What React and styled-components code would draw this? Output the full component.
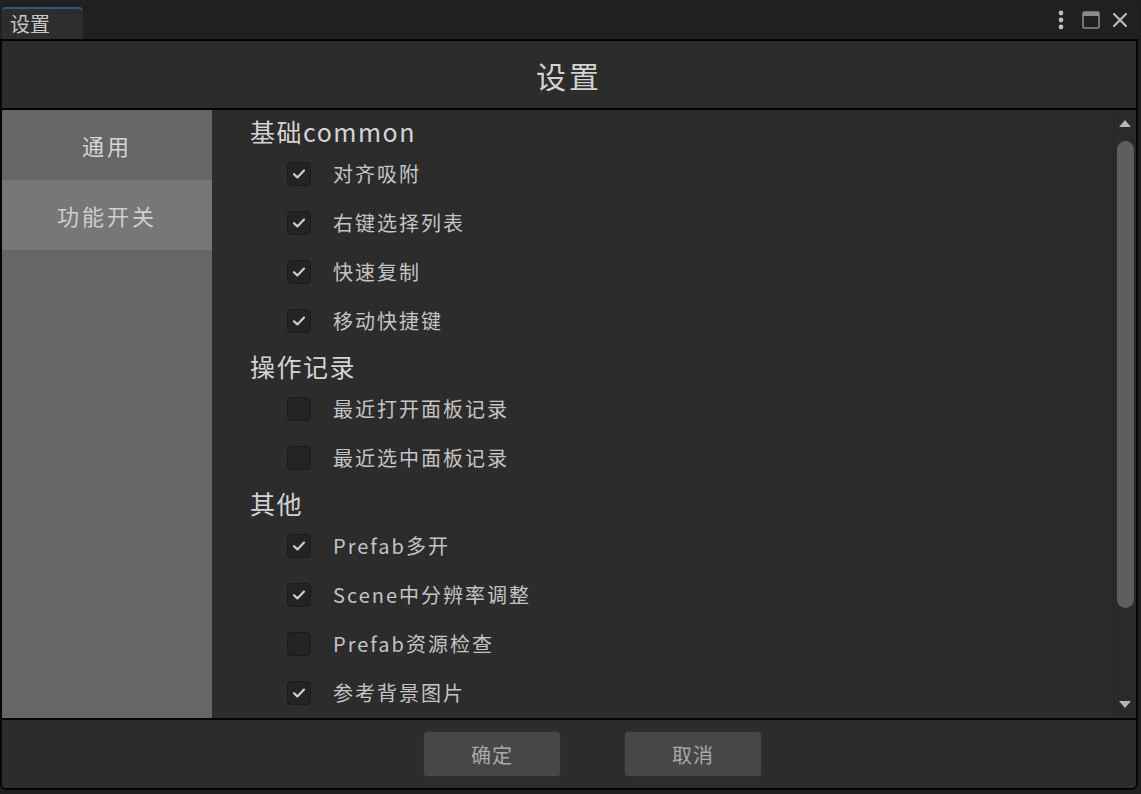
import React, { useState } from "react";
import styled, { createGlobalStyle } from "styled-components";

const GlobalStyle = createGlobalStyle`
  html, body {
    margin: 0;
    padding: 0;
    background: #1e1e1e;
    font-family: "Noto Sans CJK SC", "Noto Sans", sans-serif;
  }
`;

const Window = styled.div`
  width: 1138px;
  height: 790px;
  display: flex;
  flex-direction: column;
  background: #202020;
  border-radius: 0 8px 6px 6px;
  overflow: hidden;
`;

const TabBar = styled.div`
  height: 39px;
  display: flex;
  align-items: flex-end;
  padding-left: 2px;
  background: #202020;
`;

const Tab = styled.div`
  width: 81px;
  height: 32px;
  box-sizing: border-box;
  border-top: 2px solid #2b5a86;
  border-radius: 4px 4px 0 0;
  background: #2d2d2d;
  color: #c8c8c8;
  font-size: 20px;
  line-height: 30px;
  padding-left: 8px;
`;

const WindowTools = styled.div`
  margin-left: auto;
  height: 39px;
  display: flex;
  align-items: center;
  gap: 12px;
  padding-right: 10px;
`;

const ToolIcon = styled.svg`
  display: block;
  fill: none;
  stroke: #bdbdbd;
  margin-right: ${(p) => p.$space || 0}px;
`;

const Panel = styled.div`
  flex: 1;
  display: flex;
  flex-direction: column;
  border: 2px solid #050505;
  border-radius: 0 0 6px 6px;
  background: #2c2c2c;
  min-height: 0;
`;

const Header = styled.div`
  height: 67px;
  flex-shrink: 0;
  display: flex;
  align-items: center;
  justify-content: center;
  border-bottom: 2px solid #050505;
  color: #d2d2d2;
  font-size: 30px;
  letter-spacing: 3px;
`;

const Body = styled.div`
  flex: 1;
  display: flex;
  min-height: 0;
`;

const Sidebar = styled.div`
  width: 210px;
  flex-shrink: 0;
  background: #666666;
`;

const SideItem = styled.div`
  height: 70px;
  display: flex;
  align-items: center;
  justify-content: center;
  font-size: 22px;
  letter-spacing: 3px;
  color: ${(p) => (p.$active ? "#cfcfcf" : "#d6d6d6")};
  background: ${(p) => (p.$active ? "#777777" : "transparent")};
  cursor: pointer;
`;

const Content = styled.div`
  flex: 1;
  padding: 3px 0 0 38px;
  background: #2c2c2c;
  overflow: hidden;
`;

const GroupTitle = styled.div`
  height: 36px;
  line-height: 36px;
  margin-top: ${(p) => (p.$first ? "0" : "3px")};
  color: #d4d4d4;
  font-size: 25px;
  letter-spacing: 1.5px;
`;

const Row = styled.label`
  height: 49px;
  display: flex;
  align-items: center;
  padding-left: 37px;
  gap: 22px;
  color: #c4c4c4;
  font-size: 20px;
  letter-spacing: 2px;
  cursor: pointer;
`;

const Box = styled.span`
  width: 24px;
  height: 24px;
  box-sizing: border-box;
  flex-shrink: 0;
  display: flex;
  align-items: center;
  justify-content: center;
  background: #232323;
  border: 1px solid #1b1b1b;
  border-radius: 4px;
`;

const ScrollBar = styled.div`
  width: 23px;
  flex-shrink: 0;
  display: flex;
  flex-direction: column;
  align-items: center;
  box-sizing: border-box;
  border-left: 1px solid #252525;
  background: #2a2a2a;
  padding: 10px 0 10px;
`;

const Arrow = styled.div`
  width: 0;
  height: 0;
  border-left: 6px solid transparent;
  border-right: 6px solid transparent;
  ${(p) =>
    p.$down
      ? "border-top: 7px solid #b4b4b4;"
      : "border-bottom: 7px solid #b4b4b4;"}
`;

const Track = styled.div`
  flex: 1;
  width: 100%;
  padding: 14px 0;
  box-sizing: border-box;
  display: flex;
  justify-content: center;
`;

const Thumb = styled.div`
  width: 17px;
  height: ${(p) => p.$size}px;
  border-radius: 9px;
  background: #5e5e5e;
`;

const Footer = styled.div`
  height: 68px;
  flex-shrink: 0;
  display: flex;
  align-items: center;
  gap: 63px;
  padding-left: 421px;
  border-top: 2px solid #050505;
`;

const Button = styled.button`
  width: 138px;
  height: 46px;
  border: 1px solid #303030;
  border-radius: 4px;
  background: #474747;
  color: #a9a9a9;
  font-family: "Noto Sans CJK SC", "Noto Sans", sans-serif;
  font-size: 20px;
  letter-spacing: 1px;
  cursor: pointer;
`;

const groups = [
  {
    title: "基础common",
    items: [
      ["对齐吸附", true],
      ["右键选择列表", true],
      ["快速复制", true],
      ["移动快捷键", true],
    ],
  },
  {
    title: "操作记录",
    items: [
      ["最近打开面板记录", false],
      ["最近选中面板记录", false],
    ],
  },
  {
    title: "其他",
    items: [
      ["Prefab多开", true],
      ["Scene中分辨率调整", true],
      ["Prefab资源检查", false],
      ["参考背景图片", true],
    ],
  },
];

const Check = () => (
  <svg width="14" height="12" viewBox="0 0 14 12">
    <path
      d="M2 6.2 L5.4 9.4 L12 2.6"
      fill="none"
      stroke="#cfcfcf"
      strokeWidth="2.2"
      strokeLinecap="round"
      strokeLinejoin="round"
    />
  </svg>
);

const Option = ({ label, checked }) => {
  const [on, setOn] = useState(checked);
  return (
    <Row onClick={() => setOn(!on)}>
      <Box>{on && <Check />}</Box>
      {label}
    </Row>
  );
};

export default function App() {
  const [tab, setTab] = useState(1);
  return (
    <>
      <GlobalStyle />
      <Window>
        <TabBar>
          <Tab>设置</Tab>
          <WindowTools>
            <ToolIcon width="6" height="20" viewBox="0 0 6 20" $space={6}>
              <circle cx="3" cy="3" r="2.4" fill="#bdbdbd" stroke="none" />
              <circle cx="3" cy="10" r="2.4" fill="#bdbdbd" stroke="none" />
              <circle cx="3" cy="17" r="2.4" fill="#bdbdbd" stroke="none" />
            </ToolIcon>
            <ToolIcon width="18" height="18" viewBox="0 0 18 18">
              <rect x="1" y="1" width="16" height="16" rx="1.5" strokeWidth="1.6" stroke="#8a8a8a" />
              <rect x="1" y="1" width="16" height="4" fill="#8a8a8a" stroke="none" />
            </ToolIcon>
            <ToolIcon width="16" height="16" viewBox="0 0 16 16">
              <path d="M2 2 L14 14 M14 2 L2 14" strokeWidth="2.2" strokeLinecap="round" />
            </ToolIcon>
          </WindowTools>
        </TabBar>
        <Panel>
          <Header>设置</Header>
          <Body>
            <Sidebar>
              {["通用", "功能开关"].map((name, i) => (
                <SideItem key={name} $active={tab === i} onClick={() => setTab(i)}>
                  {name}
                </SideItem>
              ))}
            </Sidebar>
            <Content>
              {groups.map((g, gi) => (
                <div key={g.title}>
                  <GroupTitle $first={gi === 0}>{g.title}</GroupTitle>
                  {g.items.map(([label, checked]) => (
                    <Option key={label} label={label} checked={checked} />
                  ))}
                </div>
              ))}
            </Content>
            <ScrollBar>
              <Arrow />
              <Track>
                <Thumb $size={467} />
              </Track>
              <Arrow $down />
            </ScrollBar>
          </Body>
          <Footer>
            <Button>确定</Button>
            <Button>取消</Button>
          </Footer>
        </Panel>
      </Window>
    </>
  );
}
